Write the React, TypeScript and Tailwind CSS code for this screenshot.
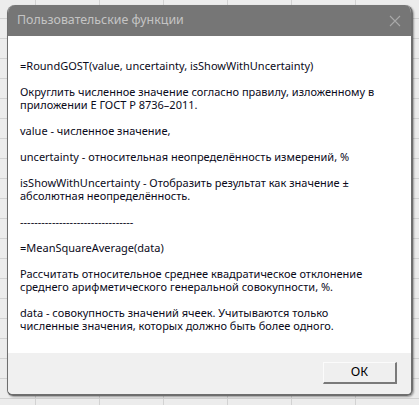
export default function App() {
  const lines: string[] = [
    "=RoundGOST(value, uncertainty, isShowWithUncertainty)",
    "",
    "Округлить численное значение согласно правилу, изложенному в",
    "приложении Е ГОСТ Р 8736–2011.",
    "",
    "value - численное значение,",
    "",
    "uncertainty - относительная неопределённость измерений, %",
    "",
    "isShowWithUncertainty - Отобразить результат как значение ±",
    "абсолютная неопределённость.",
    "",
    "--------------------------------",
    "",
    "=MeanSquareAverage(data)",
    "",
    "Рассчитать относительное среднее квадратическое отклонение",
    "среднего арифметического генеральной совокупности, %.",
    "",
    "data - совокупность значений ячеек. Учитываются только",
    "численные значения, которых должно быть более одного.",
  ];
  return (
    <div className="w-[419px] h-[405px] overflow-hidden bg-[#ececec] bg-[linear-gradient(to_right,#d2d2d2_1px,transparent_1px),linear-gradient(to_bottom,#d2d2d2_1px,transparent_1px)] bg-[size:64px_20px] bg-[position:35px_18px] pl-[7px] pt-[5px]">
      <div className="w-[406px] h-[391px] flex flex-col rounded-t-[8px] rounded-b-[6px] overflow-hidden border-l border-r-2 border-b-2 border-[#6e6e6e] shadow-[1px_1px_2px_rgba(0,0,0,0.35)]">
        <div className="h-[31px] shrink-0 bg-[#767676] flex items-center justify-between pl-[9px] pr-[8px]">
          <span className="text-[12.4px] text-[#c4c4c4]" style={{ fontFamily: '"Noto Sans", "Open Sans", sans-serif' }}>
            Пользовательские функции
          </span>
          <svg width="12" height="12" viewBox="0 0 12 12" className="mr-[2px]">
            <path d="M1 1L11 11M11 1L1 11" stroke="#a8a8a8" strokeWidth="1.1" />
          </svg>
        </div>
        <div className="flex-1 bg-white pt-[23px] pl-[12px]">
          <div className="text-[11px] leading-[13px] text-[#0a0a1a] whitespace-pre" style={{ fontFamily: '"Noto Sans", "Open Sans", sans-serif' }}>
            {lines.map((l, i) => (
              <div key={i} className="h-[13px]">{l}</div>
            ))}
          </div>
        </div>
        <div className="h-[41px] shrink-0 bg-[#f0f0f0] flex items-start justify-end pr-[14px] pt-[9px]">
          <button className="w-[74px] h-[22px] bg-[#efefef] border-t border-l border-[#fbfbfb] border-b-2 border-r-2 border-b-[#7a7a7a] border-r-[#7a7a7a] flex items-center justify-center text-[12.5px] text-black" style={{ fontFamily: '"Noto Sans", "Open Sans", sans-serif' }}>
            ОК
          </button>
        </div>
      </div>
    </div>
  );
}
